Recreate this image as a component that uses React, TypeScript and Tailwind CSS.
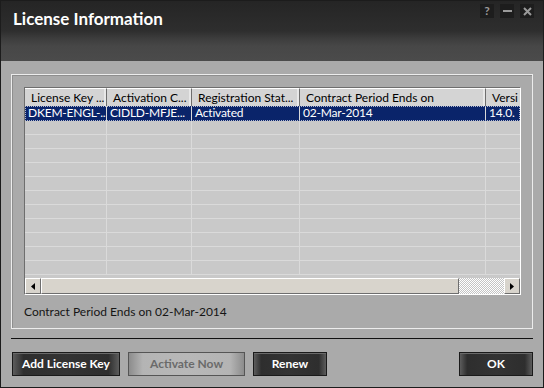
import React from "react";

const COLS = [
  { label: "License Key ...", value: "DKEM-ENGL-...", w: "w-[82px]" },
  { label: "Activation C...", value: "CIDLD-MFJE...", w: "w-[85px]" },
  { label: "Registration Stat...", value: "Activated", w: "w-[108px]" },
  { label: "Contract Period Ends on", value: "02-Mar-2014", w: "w-[186px]" },
  { label: "Versi", value: "14.0.", w: "w-[60px]" },
];

const EMPTY_ROWS = Array.from({ length: 11 });

function TitleButton({ children }: { children: React.ReactNode }) {
  return (
    <div className="flex h-[14px] w-[14px] items-center justify-center bg-[#1d1d1d] text-[#9a9a9a]">
      {children}
    </div>
  );
}

function DarkButton({ label, w, disabled }: { label: string; w: string; disabled?: boolean }) {
  if (disabled) {
    return (
      <button className={`${w} h-[24px] border border-[#555] bg-[linear-gradient(90deg,#8c8c8c_0%,#b4b4b4_12%,#b8b8b8_50%,#b4b4b4_88%,#8c8c8c_100%)] text-[12px] font-bold text-[#6a6a6a]`}>
        {label}
      </button>
    );
  }
  return (
    <button className={`${w} h-[24px] border border-[#1a1a1a] bg-[linear-gradient(90deg,#5c5c5c_0%,#2e2e2e_10%,#333_50%,#2e2e2e_90%,#5c5c5c_100%)] text-[12px] font-bold text-white shadow-[inset_0_1px_0_#6a6a6a]`}>
      {label}
    </button>
  );
}

function ArrowButton({ dir }: { dir: "left" | "right" }) {
  return (
    <div className="flex h-[16px] w-[16px] shrink-0 items-center justify-center border border-t-white border-l-white border-r-[#6e6e6e] border-b-[#6e6e6e] bg-[#d8d4cc]">
      <svg width="4" height="7" viewBox="0 0 4 7">
        {dir === "left" ? <path d="M4 0 L0 3.5 L4 7 Z" fill="#000" /> : <path d="M0 0 L4 3.5 L0 7 Z" fill="#000" />}
      </svg>
    </div>
  );
}

export default function App() {
  return (
    <div className="flex h-[388px] w-[544px] flex-col overflow-hidden border border-[#1c1c1c] bg-[#aaaaaa] font-['Lato','Liberation_Sans',sans-serif]">
      {/* title bar */}
      <div className="relative flex h-[60px] shrink-0 items-start justify-between bg-[linear-gradient(180deg,#252525_0%,#2e2e2e_50%,#3c3c3c_62%,#474747_75%,#4b4b4b_100%)] pl-[12px] pr-[9px] pt-[5px]">
        <div className="text-[17px] font-bold text-white">License Information</div>
        <div className="mt-[-2px] flex gap-[6px]">
          <TitleButton>
            <span className="text-[12px] font-bold leading-none">?</span>
          </TitleButton>
          <TitleButton>
            <span className="h-[2px] w-[9px] bg-[#9a9a9a]" />
          </TitleButton>
          <TitleButton>
            <svg width="9" height="9" viewBox="0 0 9 9">
              <path d="M1 1 L8 8 M8 1 L1 8" stroke="#9a9a9a" strokeWidth="2" />
            </svg>
          </TitleButton>
        </div>
      </div>

      {/* body */}
      <div className="flex flex-1 flex-col px-[10px] pt-[13px]">
        <div className="flex h-[255px] flex-col border border-[#ececec] pl-[12px] pr-[11px] pt-[12px] shadow-[inset_1px_1px_0_#8e8e8e]">
          <div className="flex h-[208px] flex-col overflow-hidden border border-t-[#6e6e6e] border-l-[#6e6e6e] border-r-white border-b-white bg-[#c9c9c9] text-[12px]">
            {/* header */}
            <div className="flex h-[18px] shrink-0 overflow-hidden">
              {COLS.map((c) => (
                <div
                  key={c.label}
                  className={`${c.w} shrink-0 overflow-hidden whitespace-nowrap border-t border-r border-t-white border-r-[#6e6e6e] bg-[#d4d4d4] pl-[6px] leading-[17px] text-black shadow-[inset_-2px_0_0_#e8e8e8]`}
                >
                  {c.label}
                </div>
              ))}
            </div>
            {/* selected row */}
            <div className="flex h-[15px] shrink-0 overflow-hidden bg-[#0a246a] text-white outline outline-1 -outline-offset-1 outline-dotted outline-[#b0b8d0]">
              {COLS.map((c) => (
                <div key={c.label} className={`${c.w} shrink-0 overflow-hidden whitespace-nowrap border-r border-[#d9d9d9] pl-[3px] leading-[14px] tracking-[-0.2px]`}>
                  {c.value}
                </div>
              ))}
            </div>
            {/* empty rows */}
            <div className="flex-1 overflow-hidden">
              {EMPTY_ROWS.map((_, i) => (
                <div key={i} className="flex h-[14px] border-b border-[#dadada]">
                  {COLS.map((c) => (
                    <div key={c.label} className={`${c.w} shrink-0 border-r border-[#dadada]`} />
                  ))}
                </div>
              ))}
            </div>
            {/* horizontal scrollbar */}
            <div className="flex h-[16px] shrink-0">
              <ArrowButton dir="left" />
              <div className="flex-1 border border-t-white border-l-white border-r-[#6e6e6e] border-b-[#6e6e6e] bg-[#d8d4cc]" />
              <div className="w-[45px] bg-[repeating-conic-gradient(#ffffff_0_25%,#c4c4c4_0_50%)] bg-[length:2px_2px]" />
              <ArrowButton dir="right" />
            </div>
          </div>
          <div className="mt-[8px] text-[12px] text-[#151515]">Contract Period Ends on 02-Mar-2014</div>
        </div>

        <div className="mt-[9px] h-[1px] bg-[#111]" />

        <div className="mt-[13px] flex gap-[8px] pl-[1px] pr-[0px]">
          <DarkButton label="Add License Key" w="w-[108px]" />
          <DarkButton label="Activate Now" w="w-[117px]" disabled />
          <DarkButton label="Renew" w="w-[74px]" />
          <div className="flex-1" />
          <DarkButton label="OK" w="w-[74px]" />
        </div>
      </div>
    </div>
  );
}
